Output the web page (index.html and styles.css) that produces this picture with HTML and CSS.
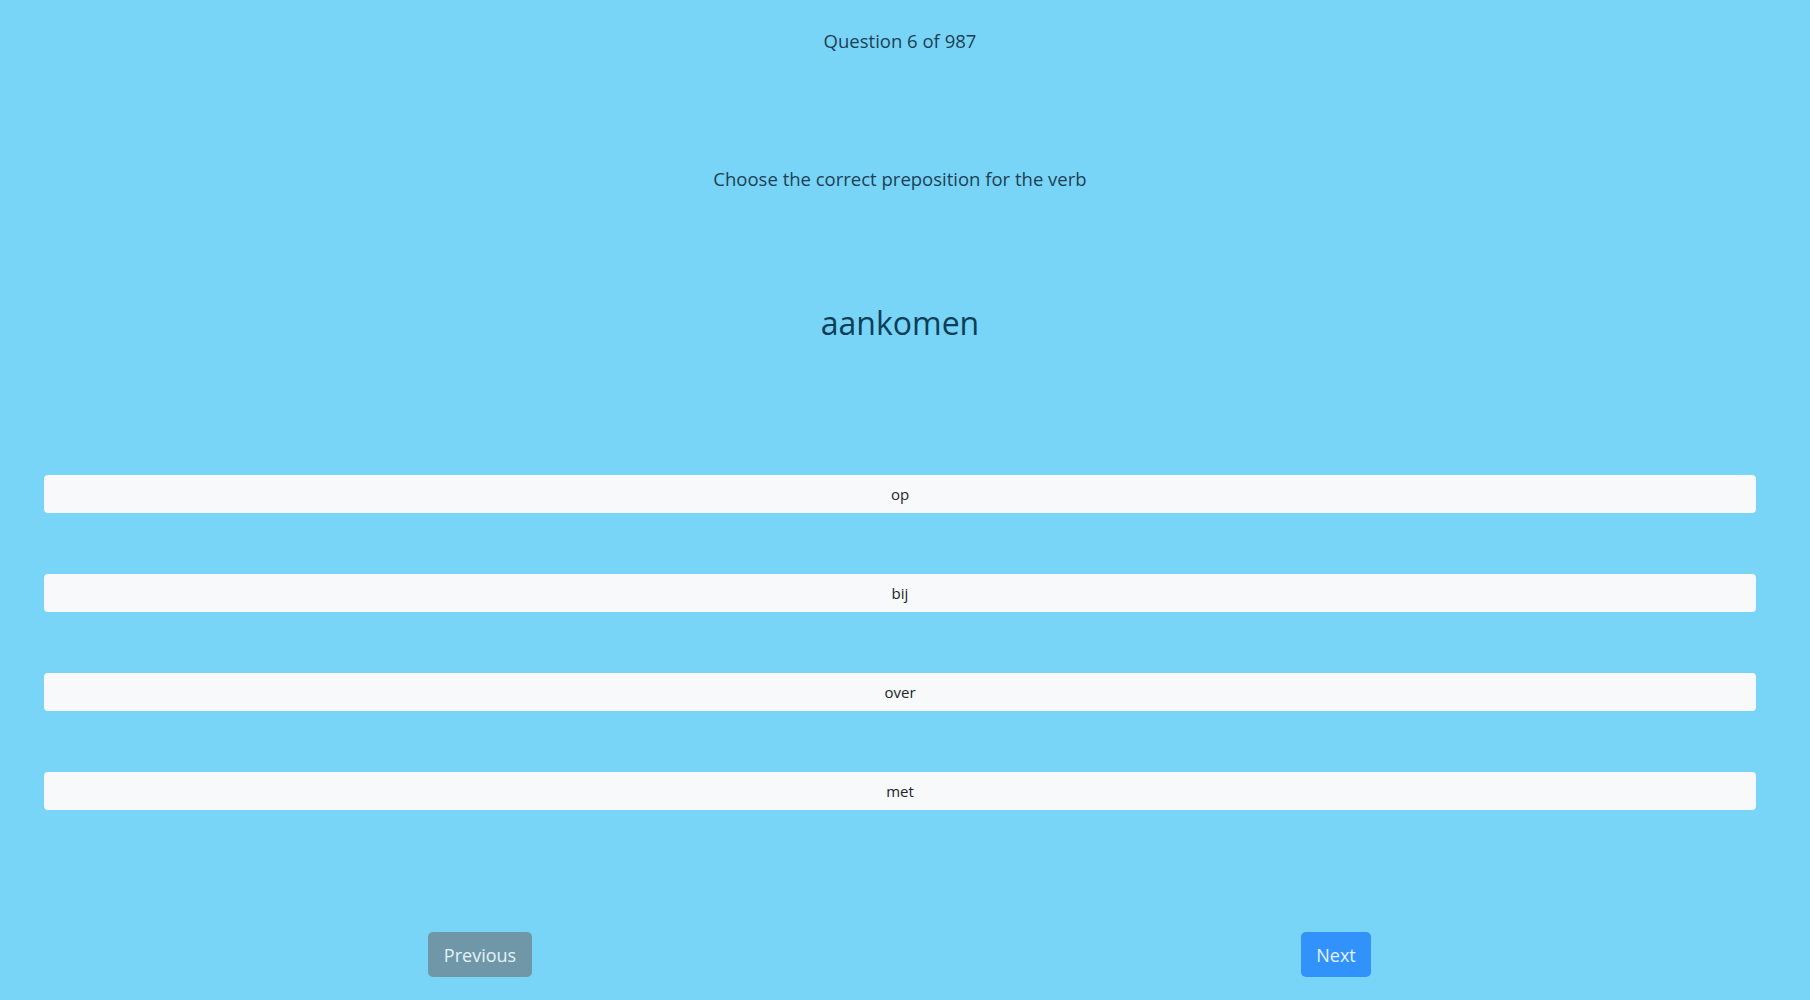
FILE: index.html
```html
<!DOCTYPE html>
<html lang="en">
<head>
<meta charset="utf-8">
<title>Quiz</title>
<link rel="stylesheet" href="styles.css">
</head>
<body>
<main class="quiz">
  <p class="counter">Question 6 of 987</p>
  <p class="prompt">Choose the correct preposition for the verb</p>
  <h1 class="verb">aankomen</h1>
  <div class="options">
    <button class="option">op</button>
    <button class="option">bij</button>
    <button class="option">over</button>
    <button class="option">met</button>
  </div>
  <div class="nav">
    <div class="nav-col"><button class="nav-btn prev" disabled>Previous</button></div>
    <div class="nav-col"><button class="nav-btn next" disabled>Next</button></div>
  </div>
</main>
</body>
</html>
```

FILE: styles.css
```css
html, body {
  margin: 0;
  padding: 0;
}
body {
  background: #78d5f7;
  font-family: "Open Sans", "Noto Sans", sans-serif;
  height: 1000px;
  overflow: hidden;
}
.quiz {
  display: flex;
  flex-direction: column;
  padding: 0 54px 0 44px;
}
.counter {
  margin: 27px 0 0;
  text-align: center;
  font-size: 18.5px;
  line-height: 28px;
  color: #1e3f56;
}
.prompt {
  margin: 110px 0 0;
  text-align: center;
  font-size: 18.5px;
  line-height: 28px;
  color: #1e3f56;
}
.verb {
  margin: 106px 0 0;
  text-align: center;
  font-weight: 400;
  font-size: 32px;
  line-height: 48px;
  color: #0c3e58;
}
.options {
  display: flex;
  flex-direction: column;
  gap: 61px;
  margin-top: 128px;
}
.option {
  display: block;
  width: 100%;
  height: 38px;
  border: 0;
  border-radius: 4px;
  background: #f8f9fa;
  color: #212529;
  font-family: inherit;
  font-size: 15px;
  text-align: center;
  padding: 0;
}
.nav {
  display: grid;
  grid-template-columns: 1fr 1fr;
  margin: 122px -8px 0 8px;
}
.nav-col {
  display: flex;
  justify-content: center;
}
.nav-btn {
  height: 45px;
  border: 0;
  border-radius: 5px;
  font-family: inherit;
  font-size: 18px;
  color: #e2f3fa;
  padding: 0 14px;
}
.prev {
  width: 104px;
  background: #7097a8;
}
.next {
  width: 70px;
  background: #3292fb;
}
```
